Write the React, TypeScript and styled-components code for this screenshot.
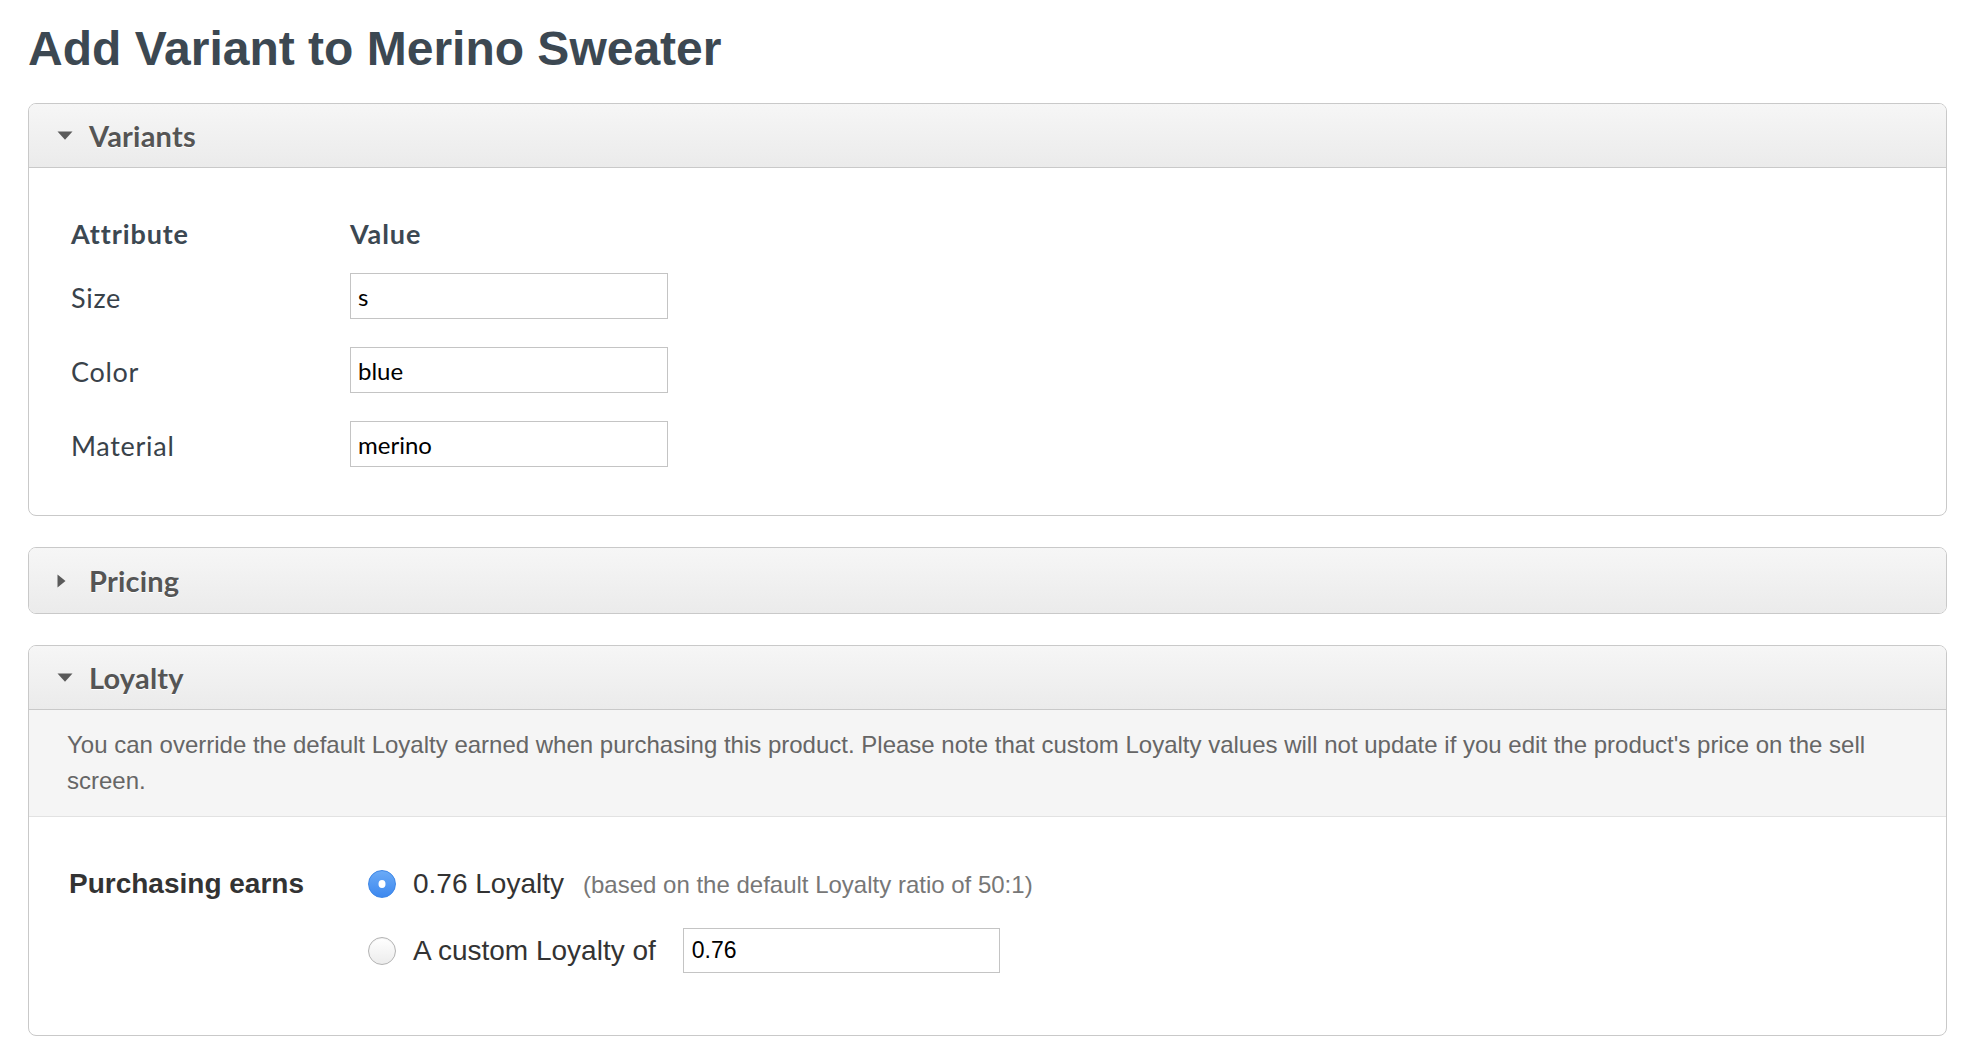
import React from "react";
import styled, { createGlobalStyle } from "styled-components";

const GlobalStyle = createGlobalStyle`
  html, body {
    margin: 0;
    padding: 0;
    background: #ffffff;
  }
  body {
    font-family: Lato, "Liberation Sans", Arial, sans-serif;
  }
  * { box-sizing: border-box; }
`;

const Page = styled.div`
  padding: 21px 33px 20px 28px;
`;

const Title = styled.h1`
  margin: 0 0 26px;
  font-family: "Liberation Sans", Arial, sans-serif;
  font-weight: 700;
  font-size: 48px;
  line-height: 56px;
  color: #3c4852;
`;

const Panel = styled.section`
  border: 1px solid #c9c9c9;
  border-radius: 8px;
  overflow: hidden;
  background: #ffffff;
  & + & {
    margin-top: 31px;
  }
`;

const PanelHeader = styled.div<{ $open: boolean }>`
  display: flex;
  align-items: center;
  gap: 16px;
  height: ${(p) => (p.$open ? "64px" : "65px")};
  padding: 0 28px;
  background: linear-gradient(#f6f6f6, #ebebeb);
  border-bottom: ${(p) => (p.$open ? "1px solid #c9c9c9" : "none")};
  font-family: Lato, "Liberation Sans", sans-serif;
  font-weight: 700;
  font-size: 29px;
  letter-spacing: 0.2px;
  color: #555555;
  text-shadow: 0 1px 0 #ffffff;
`;

const CaretBox = styled.span`
  width: 16px;
  display: flex;
  align-items: center;
  justify-content: flex-start;
  svg {
    display: block;
    fill: #5a5a5a;
  }
`;

const Caret = ({ open }: { open: boolean }) => (
  <CaretBox>
    {open ? (
      <svg width="16" height="9" viewBox="0 0 16 9">
        <path d="M0.5 0.5 L15.5 0.5 L8 8.8 Z" />
      </svg>
    ) : (
      <svg width="9" height="14" viewBox="0 0 9 14">
        <path d="M0.5 0.5 L8.5 7 L0.5 13.5 Z" />
      </svg>
    )}
  </CaretBox>
);

/* Variants */
const VariantsBody = styled.div`
  padding: 50px 0 48px 42px;
  display: flex;
  flex-direction: column;
`;

const VariantsHead = styled.div`
  display: grid;
  grid-template-columns: 279px 318px;
  margin-bottom: 23px;
  font-family: Lato, "Liberation Sans", sans-serif;
  font-weight: 700;
  font-size: 27px;
  letter-spacing: 0.9px;
  line-height: 32px;
  color: #3c4852;
`;

const VariantRows = styled.div`
  display: flex;
  flex-direction: column;
  gap: 28px;
`;

const VariantRow = styled.div`
  display: grid;
  grid-template-columns: 279px 318px;
  align-items: center;
`;

const AttrLabel = styled.span`
  padding-top: 4px;
  font-family: Lato, "Liberation Sans", sans-serif;
  font-size: 27px;
  letter-spacing: 0.7px;
  line-height: 32px;
  color: #39424a;
`;

const TextField = styled.input<{ $mono?: boolean }>`
  width: 318px;
  height: 46px;
  margin: 0;
  padding: 0 7px;
  border: 1px solid #c4c4c4;
  border-radius: 0;
  background: #ffffff;
  font-family: ${(p) =>
    p.$mono ? '"Liberation Sans", Arial, sans-serif' : 'Lato, "Liberation Sans", sans-serif'};
  font-size: ${(p) => (p.$mono ? "23px" : "24px")};
  color: #000000;
  outline: none;
`;

/* Loyalty */
const Description = styled.p`
  margin: 0;
  padding: 17px 37px 17px 38px;
  background: #f5f5f5;
  border-bottom: 1px solid #e2e2e2;
  font-family: "Liberation Sans", Arial, sans-serif;
  font-size: 24px;
  line-height: 36px;
  color: #666666;
`;

const EarnForm = styled.div`
  display: grid;
  grid-template-columns: 299px 1fr;
  padding: 44px 38px 62px 40px;
  font-family: "Liberation Sans", Arial, sans-serif;
`;

const EarnLabel = styled.div`
  height: 45px;
  display: flex;
  align-items: center;
  font-weight: 700;
  font-size: 28px;
  color: #333333;
`;

const Options = styled.div`
  display: flex;
  flex-direction: column;
  gap: 22px;
`;

const OptionRow = styled.label`
  height: 45px;
  display: flex;
  align-items: center;
  font-size: 28px;
  color: #333333;
  white-space: nowrap;
`;

const Radio = styled.span<{ $checked: boolean }>`
  position: relative;
  flex: none;
  width: 28px;
  height: 28px;
  margin-right: 17px;
  border-radius: 50%;
  border: 1px solid ${(p) => (p.$checked ? "#3d86e6" : "#b3b3b3")};
  background: ${(p) =>
    p.$checked
      ? "linear-gradient(#6aaaf6, #3d88ef)"
      : "linear-gradient(#ffffff, #ececec)"};
  box-shadow: ${(p) => (p.$checked ? "none" : "inset 0 1px 1px rgba(0,0,0,0.05)")};
  &::after {
    content: "";
    display: ${(p) => (p.$checked ? "block" : "none")};
    position: absolute;
    left: 50%;
    top: 50%;
    width: 7px;
    height: 8px;
    border-radius: 50%;
    background: #ffffff;
    transform: translate(-50%, -50%);
  }
`;

const OptionText = styled.span`
  line-height: 1;
`;

const Note = styled.span`
  margin-left: 19px;
  font-size: 24px;
  color: #777777;
`;

const CustomField = styled(TextField)`
  width: 317px;
  height: 45px;
  margin-left: 27px;
  padding: 0 8px;
`;

const variants = [
  { name: "Size", value: "s" },
  { name: "Color", value: "blue" },
  { name: "Material", value: "merino" },
];

export default function App() {
  return (
    <>
      <GlobalStyle />
      <Page>
        <Title>Add Variant to Merino Sweater</Title>

        <Panel>
          <PanelHeader $open>
            <Caret open />
            <span>Variants</span>
          </PanelHeader>
          <VariantsBody>
            <VariantsHead>
              <span>Attribute</span>
              <span>Value</span>
            </VariantsHead>
            <VariantRows>
              {variants.map((v) => (
                <VariantRow key={v.name}>
                  <AttrLabel>{v.name}</AttrLabel>
                  <TextField defaultValue={v.value} />
                </VariantRow>
              ))}
            </VariantRows>
          </VariantsBody>
        </Panel>

        <Panel>
          <PanelHeader $open={false}>
            <Caret open={false} />
            <span>Pricing</span>
          </PanelHeader>
        </Panel>

        <Panel>
          <PanelHeader $open>
            <Caret open />
            <span>Loyalty</span>
          </PanelHeader>
          <Description>
            You can override the default Loyalty earned when purchasing this product. Please
            note that custom Loyalty values will not update if you edit the product's price on
            the sell screen.
          </Description>
          <EarnForm>
            <EarnLabel>Purchasing earns</EarnLabel>
            <Options>
              <OptionRow>
                <Radio $checked role="radio" aria-checked="true" />
                <OptionText>
                  0.76 Loyalty
                  <Note>(based on the default Loyalty ratio of 50:1)</Note>
                </OptionText>
              </OptionRow>
              <OptionRow>
                <Radio $checked={false} role="radio" aria-checked="false" />
                <OptionText>A custom Loyalty of</OptionText>
                <CustomField $mono defaultValue="0.76" />
              </OptionRow>
            </Options>
          </EarnForm>
        </Panel>
      </Page>
    </>
  );
}
